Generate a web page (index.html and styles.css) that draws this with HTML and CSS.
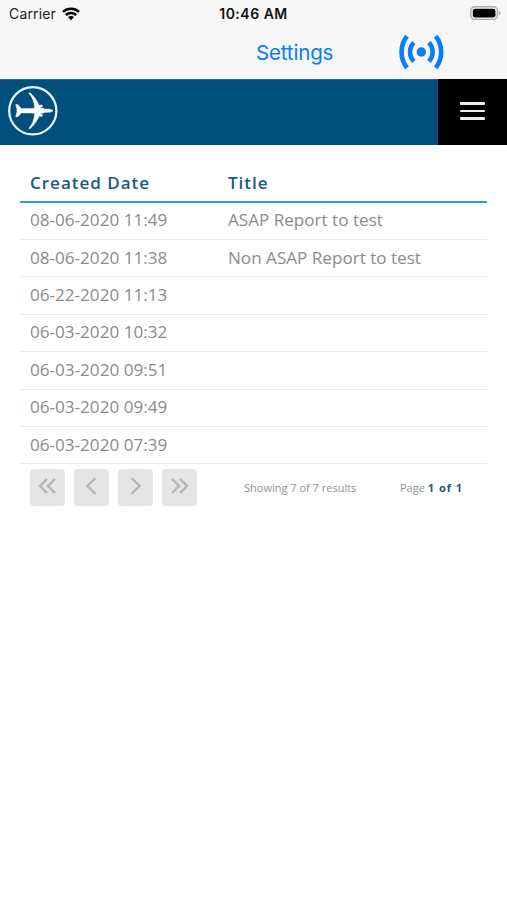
FILE: index.html
```html
<!DOCTYPE html>
<html lang="en">
<head>
<meta charset="utf-8">
<title>Reports</title>
<link rel="stylesheet" href="styles.css">
</head>
<body>
<div class="top">
  <div class="status">
    <div class="carrier"><span>Carrier</span>
      <svg width="18" height="14" viewBox="0 0 18 14" fill="none" stroke="#000" stroke-width="2.5"><path d="M1 4.8C5.5.7 12.5.7 17 4.8M3.8 8c3-2.7 7.4-2.7 10.4 0"/><path d="M9 13.2 6 10.1c1.7-1.5 4.3-1.5 6 0z" fill="#000" stroke="none"/></svg>
    </div>
    <div class="clock">10:46 AM</div>
    <svg class="battery" width="32" height="15" viewBox="0 0 32 15"><rect x=".8" y=".8" width="26.6" height="12.6" rx="3.8" fill="#f7f7f7" stroke="#aaa" stroke-width="1.4"/><rect x="2.8" y="2.8" width="22.6" height="8.8" rx="2" fill="#000"/><path d="M28.8 4.8c2.3.8 2.3 3.8 0 4.7z" fill="#aaa"/></svg>
  </div>
  <div class="nav">
    <span class="settings">Settings</span>
    <svg class="signal" width="46" height="36" viewBox="0 0 46 36" fill="none" stroke="#087cff" stroke-width="4.6"><circle cx="23.300" cy="18" r="4.700" fill="#087cff" stroke="none"/><path d="M9 2.100C1.700 11.500 1.700 24.500 9 33.900M37.700 2.100c7.300 9.400 7.300 22.400 0 31.800M15.800 8.700c-5 5.100-5 13.500 0 18.600M30.900 8.700c5 5.100 5 13.500 0 18.600"/></svg>
  </div>
</div>
<header class="bar">
  <svg class="logo" width="50" height="50" viewBox="0 0 50 50"><circle cx="24.800" cy="24.800" r="23.600" fill="none" stroke="#e9f6ff" stroke-width="2.200"/><path fill="#fff" stroke="#fff" stroke-width=".4" d="M7.600 18.600h2.300l3.400 3.800h8.700l4.700-.2c-.4-6.300-2.400-11.300-6-15.300l1.400-.2c4.700 4.500 7.500 8.800 9.200 12.800 1.700-1 3.400-.6 3.400.3 0 .8-.7 1.300-2.200 1.500l.5 1c1.600-.6 3 0 3 .6l4 .2c2.900.1 4.500.8 5 1.600-.5.800-2.100 1.500-5 1.600l-4 .2c0 .6-1.400 1.200-3 .6l-.5 1c1.500.2 2.200.7 2.200 1.500 0 .9-1.700 1.300-3.400.3-1.700 4-4.500 8.300-9.200 12.800l-1.400-.2c3.600-4 5.600-9 6-15.300l-4.700-.2h-8.700l-3.400 3.800H7.600l1.600-5.500-.8-.6.8-.6z"/></svg>
  <div class="menu"><i></i><i></i><i></i></div>
</header>
<main>
  <div class="row head"><span>Created Date</span><span>Title</span></div>
  <div class="row"><span>08-06-2020 11:49</span><span>ASAP Report to test</span></div>
  <div class="row"><span>08-06-2020 11:38</span><span>Non ASAP Report to test</span></div>
  <div class="row"><span>06-22-2020 11:13</span></div>
  <div class="row"><span>06-03-2020 10:32</span></div>
  <div class="row"><span>06-03-2020 09:51</span></div>
  <div class="row"><span>06-03-2020 09:49</span></div>
  <div class="row"><span>06-03-2020 07:39</span></div>
  <div class="pager">
    <div class="buttons">
      <div class="btn"><svg width="20" height="20" viewBox="0 0 20 20"><path d="m9 3-7 7 7 7M17 3l-7 7 7 7"/></svg></div>
      <div class="btn"><svg width="20" height="20" viewBox="0 0 20 20"><path d="m13.500 2-8 8 8 8"/></svg></div>
      <div class="btn"><svg width="20" height="20" viewBox="0 0 20 20"><path d="m5.500 2 8 8-8 8"/></svg></div>
      <div class="btn"><svg width="20" height="20" viewBox="0 0 20 20"><path d="m2 3 7 7-7 7M10 3l7 7-7 7"/></svg></div>
    </div>
    <span class="showing">Showing 7 of 7 results</span>
    <span class="page">Page <b>1 of 1</b></span>
  </div>
</main>
</body>
</html>
```
FILE: styles.css
```css
* { box-sizing: border-box; }
body { margin: 0; background: #fff; font-family: "Open Sans", sans-serif; }
svg { display: block; }
.top { height: 79px; background: #f7f7f7; font-family: Inter, sans-serif; }
.status { display: grid; grid-template-columns: 1fr 1fr 1fr; align-items: center; height: 27px; padding: 0 5px 0 9px; }
.carrier { display: flex; align-items: center; gap: 6px; font-size: 14px; color: #222; letter-spacing: .15px; }
.clock { justify-self: center; margin-right: 4px; font-size: 14px; font-weight: 600; color: #111; letter-spacing: .5px; }
.battery { justify-self: end; }
.nav { display: flex; align-items: center; height: 50px; padding-left: 256px; }
.settings { width: 142px; font-size: 20.5px; color: #087cff; letter-spacing: -.15px; }
.bar { display: flex; justify-content: space-between; height: 66px; background: #004f7c; border-top: 1px solid #2c6580; }
.logo { margin: 6px 0 0 8px; }
.menu { display: flex; flex-direction: column; align-items: center; width: 69px; margin-top: -1px; padding-top: 23px; gap: 5px; background: #000; }
.menu i { width: 25px; height: 2.5px; border-radius: 1px; background: #eee; }
main { padding: 20px 20px 0; }
.row { display: grid; grid-template-columns: 198px 1fr; align-items: center; height: 37.4px; padding: 0 10px 2px; border-bottom: 1px solid #e9e9e9; font-size: 17.1px; color: #8b8b8b; white-space: nowrap; }
.head { height: 37.6px; padding-bottom: 0; border-bottom: 2px solid #2d9cd0; font-size: 17px; font-weight: 600; color: #175a85; letter-spacing: 1px; }
.pager { display: flex; align-items: center; height: 46.6px; padding-left: 10px; font-size: 11px; color: #929292; }
.buttons { display: flex; gap: 9px; width: 214px; }
.btn { display: grid; place-items: center; width: 35px; height: 37px; padding-bottom: 4px; border-radius: 4px; background: #e5e5e5; }
.btn path { fill: none; stroke: #b5b5b5; stroke-width: 2.4; }
.showing { width: 156px; }
.page b { color: #175a85; letter-spacing: 1px; }
```
